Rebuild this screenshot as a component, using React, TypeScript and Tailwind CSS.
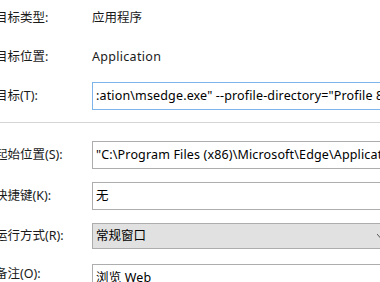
import React from "react";

const font = "font-['Noto_Sans','Noto_Sans_CJK_SC',sans-serif]";

const Label = ({ text }: { text: string }) => (
    <div className="w-[97px] shrink-0 text-[12.5px] text-[#1a1a1a]">{text}</div>
);

const Box = ({
    value,
    className,
}: {
    value: string;
    className: string;
}) => (
    <div
        className={`flex-1 min-w-0 flex items-center pl-[3px] whitespace-nowrap overflow-hidden text-[12.5px] tracking-[0.15px] text-black ${className}`}
    >
        {value}
    </div>
);

const App = () => {
    return (
        <div className={`w-[380px] h-[282px] overflow-hidden bg-white ${font}`}>
            <div className="ml-[-5px] w-[400px] flex flex-col">
                <div className="flex items-center h-[20px] mt-[8px]">
                    <Label text="目标类型:" />
                    <div className="text-[12.5px] text-[#1a1a1a]">应用程序</div>
                </div>

                <div className="flex items-center h-[20px] mt-[19px]">
                    <Label text="目标位置:" />
                    <div className="text-[12.5px] tracking-[0.3px] text-[#1a1a1a]">Application</div>
                </div>

                <div className="flex items-center h-[28px] mt-[15px]">
                    <Label text="目标(T):" />
                    <Box
                        value={':ation\\msedge.exe" --profile-directory="Profile 8"'}
                        className="h-full border border-[#7eb4ea]"
                    />
                </div>

                <div className="h-[1px] mt-[12px] bg-[#d5d5d5]" />

                <div className="flex items-center h-[28px] mt-[18px]">
                    <Label text="起始位置(S):" />
                    <Box
                        value={'"C:\\Program Files (x86)\\Microsoft\\Edge\\Application"'}
                        className="h-full border border-[#adadad]"
                    />
                </div>

                <div className="flex items-center h-[28px] mt-[13px]">
                    <Label text="快捷键(K):" />
                    <Box value="无" className="h-full border border-[#adadad]" />
                </div>

                <div className="flex items-center h-[26px] mt-[13px]">
                    <Label text="运行方式(R):" />
                    <div className="relative flex-1 h-full flex items-center pl-[3px] bg-[#e1e1e1] border border-[#adadad] text-[12.5px] text-black">
                        常规窗口
                        <svg
                            className="absolute left-[284px] top-[10px]"
                            width="7"
                            height="4"
                            viewBox="0 0 7 4"
                        >
                            <path d="M0 0 L3.5 4 L7 0" fill="none" stroke="#555" strokeWidth="1" />
                        </svg>
                    </div>
                </div>

                <div className="flex items-start h-[40px] mt-[15px]">
                    <div className="h-[20px] flex items-center">
                        <Label text="备注(O):" />
                    </div>
                    <Box value="浏览 Web" className="h-[28px] border border-[#adadad]" />
                </div>
            </div>
        </div>
    );
};

export default App;
